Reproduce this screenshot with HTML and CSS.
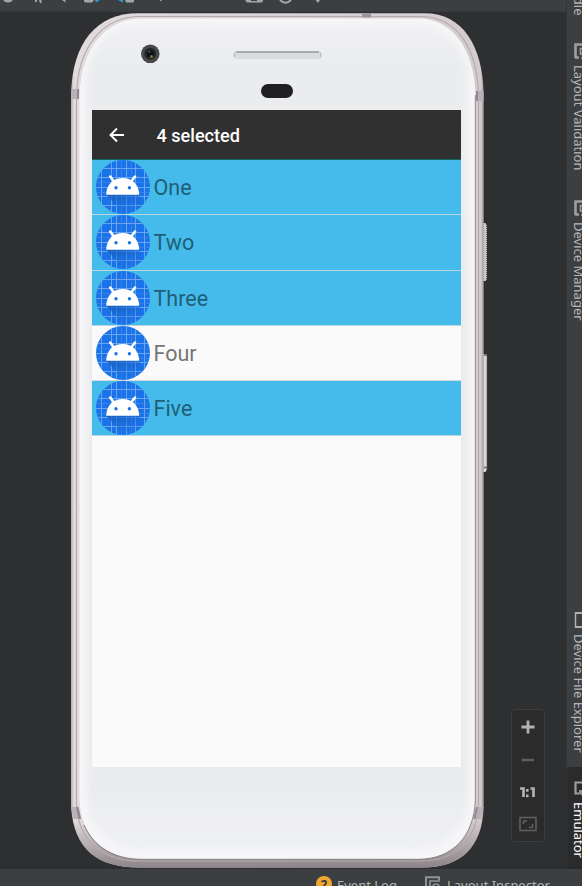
FILE: index.html
```
<!DOCTYPE html>
<html lang="en">
<head>
<meta charset="utf-8">
<title>Emulator</title>
<link rel="stylesheet" href="styles.css">
</head>
<body>
<svg width="0" height="0" class="defs" aria-hidden="true">
  <defs>
    <clipPath id="disc"><circle cx="27" cy="27" r="27"/></clipPath>
    <linearGradient id="shade" x1="0" y1="0" x2=".7" y2="1"><stop offset="0" stop-color="#1456ae" stop-opacity=".85"/><stop offset="1" stop-color="#1a73e8" stop-opacity="0"/></linearGradient>
    <symbol id="droid" viewBox="0 0 54 54">
      <g clip-path="url(#disc)">
        <rect width="54" height="54" fill="#1a73e8"/>
        <path d="M5.500 0V54M15.500 0V54M20.500 0V54M30.500 0V54M39.500 0V54M48.500 0V54M0 8.500H54M0 17.500H54M0 27.500H54M0 36.500H54M0 45.500H54" stroke="#73a9f2" stroke-width=".9"/>
        <path d="M0 22.500H54M0 32.500H54M25.500 0V54M35.500 0V54" stroke="#4c8fed" stroke-width=".5"/>
        <path d="M10 34.500H43L48 44 32 54H28Z" fill="url(#shade)"/>
      </g>
      <path d="M14.200 16.500 18 21.500M39 16.500 35.200 21.500" stroke="#fff" stroke-width="2.600" stroke-linecap="round"/>
      <path d="M10.200 34.800C10.500 24.500 17 18 26.700 18S42.900 24.500 43.200 34.800Z" fill="#fff"/>
      <circle cx="20" cy="27.800" r="1.700" fill="#1a73e8"/><circle cx="33.400" cy="27.800" r="1.700" fill="#1a73e8"/>
    </symbol>
    <symbol id="panes" viewBox="0 0 16 16">
      <path d="M1 13V1.200H14V4" fill="none" stroke="#909395" stroke-width="2"/>
      <path d="M5 15V5H15" fill="none" stroke="#909395" stroke-width="1.600"/>
      <circle cx="11" cy="11" r="3" fill="none" stroke="#909395" stroke-width="1.600"/>
    </symbol>
    <symbol id="panes-turned" viewBox="0 0 16 16">
      <path d="M1.500 15V1.500H16" fill="none" stroke="#9c9ea0" stroke-width="2.600"/>
      <path d="M1 14.500H5" stroke="#9c9ea0" stroke-width="2.500"/>
      <path d="M16 5.500H6.500V11H11V15H7" fill="none" stroke="#9c9ea0" stroke-width="1.600"/>
    </symbol>
  </defs>
</svg>
<div class="ide">
  <header class="toolbar">
    <svg width="340" height="12">
      <g fill="#a3a6a8">
        <path d="M3 0H13Q11 2.500 8 2.500T3 0ZM35 0H37V2H35ZM39 0H41.500V3H40ZM62 0H65.500V2.500ZM84 0H94L92 2.500H85.500L84 1.500ZM125 0H134V1.500L133 2.500H126ZM160 0H161.500V1H160ZM245.500 0H263V1L261.500 2.500H247L245.500 1ZM315.500 0H320L318 3Z"/>
      </g>
      <path d="M95 0H100L96 2.500ZM118 0H123V2.500Z" fill="#2c9bd9"/>
      <rect x="251" y="0" width="6" height="1" fill="#3c3f41"/>
      <path d="M280 0Q285.500 5.500 291 0" stroke="#a3a6a8" stroke-width="2" fill="none"/>
    </svg>
  </header>
  <main class="stage">
    <div class="phone">
      <svg class="shell" width="417" height="856" viewBox="71 12 417 856">
        <defs>
          <linearGradient id="rim" x1="0" x2="1"><stop offset="0" stop-color="#b5aaad"/><stop offset=".007" stop-color="#e1dbde"/><stop offset=".993" stop-color="#d4cbce"/><stop offset="1" stop-color="#9f9698"/></linearGradient>
          <linearGradient id="under" gradientUnits="userSpaceOnUse" x1="0" y1="820" x2="0" y2="867"><stop offset="0" stop-color="#8f868a" stop-opacity="0"/><stop offset="1" stop-color="#8f868a"/></linearGradient>
          <linearGradient id="face" x1="0" y1="0" x2="0" y2="1"><stop offset="0" stop-color="#eff0f1"/><stop offset=".05" stop-color="#ebecee"/><stop offset=".92" stop-color="#eaebed"/><stop offset="1" stop-color="#f0f1f3"/></linearGradient>
          <filter id="soft"><feGaussianBlur stdDeviation="3"/></filter>
          <clipPath id="faceclip"><rect x="80" y="19" width="395.500" height="840" rx="58"/></clipPath>
        </defs>
        <path d="M483 223H485.500L487 226V279L485.500 281H483Z" fill="#c8cac9"/>
        <path d="M486.500 226V279" stroke="#646766" stroke-dasharray="1 1"/>
        <path d="M483 354H486L487 356V469L485.500 472H483Z" fill="#d9dbd9"/>
        <path d="M486.700 356V469" stroke="#8c8f8d" stroke-width=".7"/>
        <path d="M484 355H487M484 467.500H487" stroke="#777a76" stroke-width="2"/>
        <path d="M71 95C72 42 97 13.200 138 13.200H425C462 13.200 483 45 483.700 95V808C482 847 461 867.500 423 867.500H139C98 867.500 74 850 71 807Z" fill="url(#rim)"/>
        <path d="M71 807C74 850 98 867.500 139 867.500H423C461 867.500 482 847 483.700 808Z" fill="url(#under)"/>
        <path d="M76.500 95C78 46 103 16.500 140 16.500H420C456 16.500 477 46 478.500 95V804C477 841 455 861 420 861H140C101 861 77 840 76.500 802Z" fill="none" stroke="#b3a9ad" stroke-width="1.100"/>
        <path d="M79.500 95C81 48 106 18.500 142 18.500H418C452 18.500 474 48 475.500 95V800C474 837 452 859.300 418 859.300H142C104 859.300 81 836 79.500 800Z" fill="#f6f6f8"/>
        <g clip-path="url(#faceclip)"><rect x="87" y="25" width="381" height="825" rx="54" fill="url(#face)" filter="url(#soft)"/></g>
        <path d="M84 825C93 846 113 859.300 142 859.300H418C452 859.300 474 837 475.300 800V95" fill="none" stroke="#777174" stroke-width=".8"/>
        <path d="M362 13.500H371V17.500H362Z" fill="#9d9497"/>
        <path d="M71.500 89H79V99H71.300ZM476 91H483.500V101H476ZM71 807H78.500L81 819H73.500ZM476 807H483.500L481 819H473.500Z" fill="#b9b1b5"/>
        <path d="M77 89H79V99H77ZM476 91H478V101H476ZM76 807H78.500L81 819H78.500ZM476 807H478L475.500 819H473.500Z" fill="#91898d"/>
        <circle cx="150.300" cy="53.800" r="9.300" fill="#48494b"/>
        <circle cx="150.300" cy="53.800" r="6" fill="#242528"/><circle cx="150.500" cy="53.800" r="3.500" fill="#101116"/>
        <circle cx="151.500" cy="56.500" r="1.500" fill="#77783e"/><circle cx="149.300" cy="51.800" r="1" fill="#555a66"/>
        <rect x="233" y="51" width="89" height="8" rx="4" fill="#d9dbdf"/>
        <path d="M236 52H319" stroke="#a8abb4" stroke-width="2"/><path d="M234.500 57V53M320.500 57V53" stroke="#b8bbc2"/>
        <rect x="261" y="84" width="32" height="14" rx="7" fill="#202023"/>
      </svg>
      <section class="screen">
        <div class="appbar">
          <svg class="back" width="16" height="16" viewBox="0 0 16 16"><path d="M15 8H2M8 1.500 1.500 8 8 14.500" fill="none" stroke="#fff" stroke-width="1.900"/></svg>
          <span class="title">4 selected</span>
        </div>
        <ul class="list">
          <li class="row selected"><svg class="avatar"><use href="#droid"/></svg><span>One</span></li>
          <li class="row selected"><svg class="avatar"><use href="#droid"/></svg><span>Two</span></li>
          <li class="row selected"><svg class="avatar"><use href="#droid"/></svg><span>Three</span></li>
          <li class="row"><svg class="avatar"><use href="#droid"/></svg><span>Four</span></li>
          <li class="row selected"><svg class="avatar"><use href="#droid"/></svg><span>Five</span></li>
        </ul>
      </section>
    </div>
    <div class="zoom">
      <svg width="34" height="133" viewBox="0 0 34 133" fill="none">
        <path d="M10.500 18H23.500M17 11.500V24.500" stroke="#afb1b3" stroke-width="2.800"/>
        <path d="M10.500 51H23" stroke="#5d5f60" stroke-width="2.500"/>
        <path d="M9 79.500H12.500V88M19.500 79.500H22.500V88" stroke="#afb1b3" stroke-width="2.700"/>
        <path d="M15 80H17.500V82.700H15ZM15 85.500H17.500V88.200H15Z" fill="#afb1b3"/>
        <path d="M9 108.500H25V121.500H9Z" stroke="#5d5f60" stroke-width="1.600"/>
        <path d="M12.500 115V112H16M18 118.500H21.500V115" stroke="#5d5f60" stroke-width="1.500"/>
      </svg>
    </div>
  </main>
  <aside class="rail">
    <div class="tab gradle"><span>Gradle</span></div>
    <div class="tab validation"><svg class="ico" width="16" height="16"><use href="#panes-turned"/></svg><span>Layout Validation</span></div>
    <div class="tab manager"><svg class="ico" width="16" height="16"><use href="#panes-turned"/></svg><span>Device Manager</span></div>
    <div class="tab explorer"><svg class="ico" width="16" height="16" viewBox="0 0 16 16"><path d="M1.500 1V15" fill="none" stroke="#afb1b3" stroke-width="1.500"/><path d="M1 1H15M1 15H15" stroke="#afb1b3" stroke-width="2"/></svg><span>Device File Explorer</span></div>
    <div class="tab emulator"><svg class="ico" width="16" height="16" viewBox="0 0 16 16"><path d="M15 1.500H1.500V12.500H5" fill="none" stroke="#9c9ea0" stroke-width="2.200"/><path d="M5 9H14V13L10 15 5 13Z" fill="#8d9092"/></svg><span>Emulator</span></div>
  </aside>
  <footer class="status">
    <svg class="badge" width="16" height="16" viewBox="0 0 16 16"><circle cx="8" cy="8" r="8" fill="#f0a732"/><text x="8" y="12.500" text-anchor="middle" class="badge-num">2</text></svg>
    <span class="log">Event Log</span>
    <svg class="inspect" width="16" height="16"><use href="#panes"/></svg>
    <span class="inspector">Layout Inspector</span>
  </footer>
</div>
</body>
</html>
```
FILE: styles.css
```
* { box-sizing: border-box; }
body { margin: 0; overflow: hidden; background: #2d2f31; }
svg { display: block; flex: none; }
.defs { position: absolute; }
.ide {
  display: grid;
  grid-template: 12px 856px 18px / 566px 16px;
  width: 582px; height: 886px; overflow: hidden;
  font-family: "Noto Sans", "Open Sans", sans-serif;
  color: #b4b6b8;
}
.toolbar { background: #3c3f41; border-bottom: 1px solid #37393b; }
.stage { grid-row: 2; display: flex; align-items: flex-start; background: #2d2f31; }
.phone { position: relative; width: 413px; height: 856px; margin-left: 71px; padding: 98px 23px 0 21px; flex: none; }
.shell { position: absolute; left: 0; top: 0; }
.screen { position: relative; width: 369px; height: 657px; background: #fafafa; font-family: Roboto, sans-serif; }
.appbar { display: flex; align-items: center; height: 50px; padding: 2px 0 0 17px; background: #303030; border-bottom: 1px solid #12665c; }
.title { margin-left: 31.500px; color: #fff; font-size: 18.100px; font-weight: 500; line-height: 24px; }
.back { margin-top: -2px; }
.list { margin: 0; padding: 0; list-style: none; }
.row { display: flex; align-items: center; height: 55.25px; padding: 0 0 0 4px; border-bottom: 1px solid #d8d8d8; color: #757575; font-size: 21.500px; line-height: 28px; }
.row.selected { background: #45bbeb; border-bottom-color: #b9d6e0; color: #205f77; }
.avatar { width: 54px; height: 54px; margin-right: 3.500px; }
.row span { padding-top: 2px; }
.zoom { width: 34px; height: 133px; margin: 697px 0 0 27px; border: 1px solid #3b3d3e; border-radius: 4px; background: #2b2b2b; }
.zoom svg { margin: -1px; }
.rail { grid-column: 2; grid-row: 1 / 3; overflow: hidden; background: #3c3f41; border-left: 1px solid #323436; }
.tab { display: flex; flex-direction: column; align-items: flex-start; width: 28px; padding-left: 5px; font-size: 13px; line-height: 18px; }
.tab span { writing-mode: vertical-rl; white-space: nowrap; margin-left: -2px; }
.ico { margin: 0 0 6px 2px; }
.gradle { height: 43px; justify-content: flex-end; padding-bottom: 27px; }
.validation { height: 157px; }
.manager { height: 412px; }
.explorer { height: 155px; }
.emulator { height: 101px; padding-top: 14px; background: #2b2b2b; color: #fff; border-bottom: 1px solid #242526; }
.emulator .ico { margin-bottom: 5px; }
.status { grid-column: 1 / 3; display: flex; align-items: flex-start; padding: 7px 0 0 316px; background: #3c3f41; border-top: 1px solid #2b2d2e; font-size: 13px; line-height: 18px; overflow: hidden; }
.badge-num { font: bold 12px "Noto Sans", sans-serif; fill: #343536; }
.log { margin-left: 5px; width: 88px; }
.inspector { margin-left: 6px; }
```
